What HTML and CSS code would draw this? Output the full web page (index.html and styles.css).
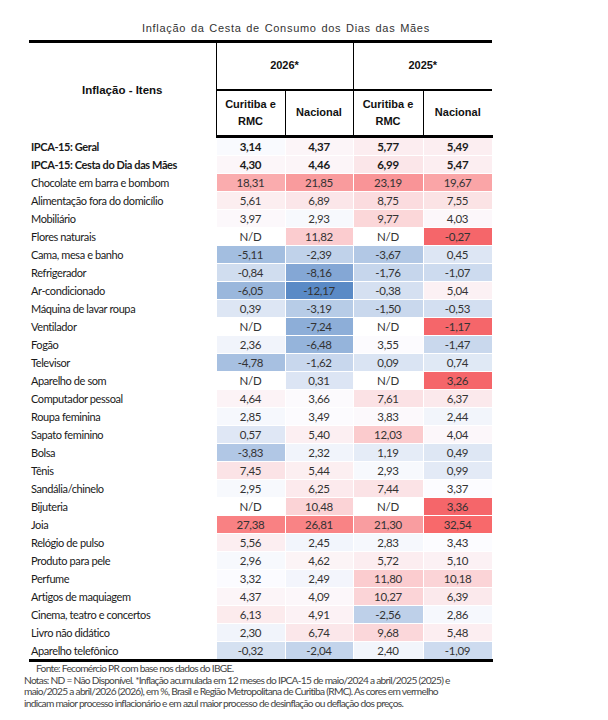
FILE: index.html
```html
<!DOCTYPE html>
<html lang="pt-BR">
<head>
    <meta charset="UTF-8">
    <title>Inflação da Cesta de Consumo dos Dias das Mães</title>
    <link rel="stylesheet" href="styles.css">
</head>
<body>
    <div class="page">
        <h1 class="title">Inflação da Cesta de Consumo dos Dias das Mães</h1>

        <table class="infl-table">
            <colgroup>
                <col class="col-label">
                <col class="col-a">
                <col class="col-b">
                <col class="col-c">
                <col class="col-d">
            </colgroup>
            <thead>
                <tr class="year-row">
                    <th rowspan="2" class="label-head">Inflação - Itens</th>
                    <th colspan="2" class="year">2026*</th>
                    <th colspan="2" class="year">2025*</th>
                </tr>
                <tr class="place-row">
                    <th>Curitiba e<br>RMC</th>
                    <th>Nacional</th>
                    <th>Curitiba e<br>RMC</th>
                    <th>Nacional</th>
                </tr>
            </thead>
            <tbody>
                <tr class="bold"><td>IPCA-15: Geral</td><td>3,14</td><td>4,37</td><td>5,77</td><td>5,49</td></tr>
                <tr class="bold"><td>IPCA-15: Cesta do Dia das Mães</td><td>4,30</td><td>4,46</td><td>6,99</td><td>5,47</td></tr>
                <tr><td>Chocolate em barra e bombom</td><td>18,31</td><td>21,85</td><td>23,19</td><td>19,67</td></tr>
                <tr><td>Alimentação fora do domicílio</td><td>5,61</td><td>6,89</td><td>8,75</td><td>7,55</td></tr>
                <tr><td>Mobiliário</td><td>3,97</td><td>2,93</td><td>9,77</td><td>4,03</td></tr>
                <tr><td>Flores naturais</td><td>N/D</td><td>11,82</td><td>N/D</td><td class="hl">-0,27</td></tr>
                <tr><td>Cama, mesa e banho</td><td>-5,11</td><td>-2,39</td><td>-3,67</td><td>0,45</td></tr>
                <tr><td>Refrigerador</td><td>-0,84</td><td>-8,16</td><td>-1,76</td><td>-1,07</td></tr>
                <tr><td>Ar-condicionado</td><td>-6,05</td><td>-12,17</td><td>-0,38</td><td>5,04</td></tr>
                <tr><td>Máquina de lavar roupa</td><td>0,39</td><td>-3,19</td><td>-1,50</td><td>-0,53</td></tr>
                <tr><td>Ventilador</td><td>N/D</td><td>-7,24</td><td>N/D</td><td class="hl">-1,17</td></tr>
                <tr><td>Fogão</td><td>2,36</td><td>-6,48</td><td>3,55</td><td>-1,47</td></tr>
                <tr><td>Televisor</td><td>-4,78</td><td>-1,62</td><td>0,09</td><td>0,74</td></tr>
                <tr><td>Aparelho de som</td><td>N/D</td><td>0,31</td><td>N/D</td><td class="hl">3,26</td></tr>
                <tr><td>Computador pessoal</td><td>4,64</td><td>3,66</td><td>7,61</td><td>6,37</td></tr>
                <tr><td>Roupa feminina</td><td>2,85</td><td>3,49</td><td>3,83</td><td>2,44</td></tr>
                <tr><td>Sapato feminino</td><td>0,57</td><td>5,40</td><td>12,03</td><td>4,04</td></tr>
                <tr><td>Bolsa</td><td>-3,83</td><td>2,32</td><td>1,19</td><td>0,49</td></tr>
                <tr><td>Tênis</td><td>7,45</td><td>5,44</td><td>2,93</td><td>0,99</td></tr>
                <tr><td>Sandália/chinelo</td><td>2,95</td><td>6,25</td><td>7,44</td><td>3,37</td></tr>
                <tr><td>Bijuteria</td><td>N/D</td><td>10,48</td><td>N/D</td><td class="hl">3,36</td></tr>
                <tr><td>Joia</td><td>27,38</td><td>26,81</td><td>21,30</td><td>32,54</td></tr>
                <tr><td>Relógio de pulso</td><td>5,56</td><td>2,45</td><td>2,83</td><td>3,43</td></tr>
                <tr><td>Produto para pele</td><td>2,96</td><td>4,62</td><td>5,72</td><td>5,10</td></tr>
                <tr><td>Perfume</td><td>3,32</td><td>2,49</td><td>11,80</td><td>10,18</td></tr>
                <tr><td>Artigos de maquiagem</td><td>4,37</td><td>4,09</td><td>10,27</td><td>6,39</td></tr>
                <tr><td>Cinema, teatro e concertos</td><td>6,13</td><td>4,91</td><td>-2,56</td><td>2,86</td></tr>
                <tr><td>Livro não didático</td><td>2,30</td><td>6,74</td><td>9,68</td><td>5,48</td></tr>
                <tr><td>Aparelho telefônico</td><td>-0,32</td><td>-2,04</td><td>2,40</td><td>-1,09</td></tr>
            </tbody>
        </table>

        <div class="notes">
            <p class="source">Fonte: Fecomércio PR com base nos dados do IBGE.</p>
            <p>Notas: ND = Não Disponível. *Inflação acumulada em 12 meses do IPCA-15 de maio/2024 a abril/2025 (2025) e<br>maio/2025 a abril/2026 (2026), em %, Brasil e Região Metropolitana de Curitiba (RMC). As cores em vermelho<br>indicam maior processo inflacionário e em azul maior processo de desinflação ou deflação dos preços.</p>
        </div>
    </div>

    <script>
        // Escala de cores do Excel: azul (mín) - branco (mediana) - vermelho (máx)
        const cells = document.querySelectorAll('.infl-table tbody td:not(:first-child)');
        const values = [];

        cells.forEach(cell => {
            const v = parseFloat(cell.textContent.replace(',', '.'));
            if (!isNaN(v)) values.push(v);
        });

        const sorted = [...values].sort((a, b) => a - b);
        const min = sorted[0];
        const max = sorted[sorted.length - 1];
        const mid = 3.4;

        const blue = [90, 138, 198];
        const white = [252, 252, 255];
        const red = [248, 105, 107];

        function mix(a, b, t) {
            return a.map((c, i) => Math.round(c + (b[i] - c) * t));
        }

        cells.forEach(cell => {
            if (cell.classList.contains('hl')) return;
            const v = parseFloat(cell.textContent.replace(',', '.'));
            if (isNaN(v)) return;
            let rgb;
            if (v < mid) {
                rgb = mix(white, blue, (mid - v) / (mid - min));
            } else {
                rgb = mix(white, red, Math.pow((v - mid) / (max - mid), 0.9));
            }
            cell.style.backgroundColor = `rgb(${rgb.join(',')})`;
        });
    </script>
</body>
</html>
```

FILE: styles.css
```css
* {
    margin: 0;
    padding: 0;
    box-sizing: border-box;
}

body {
    background-color: #fff;
    font-family: Lato, "Open Sans", sans-serif;
    color: #222;
}

.page {
    padding: 20px 0 0 29px;
}

.title {
    font-family: "Liberation Sans", Arial, sans-serif;
    font-weight: normal;
    font-size: 11px;
    letter-spacing: 0.7px;
    word-spacing: 1px;
    color: #333;
    padding-left: 113px;
    height: 20px;
    line-height: 16px;
}

.infl-table {
    width: 463px;
    border-collapse: collapse;
    table-layout: fixed;
    border-top: 3px solid #000;
    border-bottom: 3px solid #000;
}

.col-label { width: 187px; }
.col-a { width: 69px; }
.col-b { width: 68px; }
.col-c { width: 70px; }
.col-d { width: 69px; }

.infl-table th {
    font-family: "Liberation Sans", Arial, sans-serif;
    font-weight: bold;
    font-size: 11px;
    color: #111;
    text-align: center;
    vertical-align: middle;
    border-left: 1px solid #000;
    line-height: 17px;
}

.infl-table th.label-head {
    border-left: none;
    font-size: 11.5px;
    padding-top: 2px;
}

.year-row th {
    height: 48px;
}

.year-row th.year {
    border-bottom: 2px solid #000;
}

.place-row th {
    height: 47px;
    border-bottom: 3px solid #000;
}

.infl-table td {
    height: 18px;
    font-size: 11.5px;
    letter-spacing: -0.3px;
    line-height: 17px;
    text-align: center;
    color: #333;
    border: 1px solid #fff;
    white-space: nowrap;
}

.infl-table td:first-child {
    text-align: left;
    padding-left: 2px;
    font-size: 11px;
    letter-spacing: -0.4px;
    color: #1a1a1a;
    border: none;
}

.infl-table tr.bold td {
    font-weight: bold;
    color: #1a1a1a;
}

.infl-table td.hl {
    background-color: #f5666a;
}

.notes {
    font-size: 10.2px;
    letter-spacing: -0.72px;
    line-height: 11.5px;
    color: #444;
    margin-left: -5px;
    margin-top: 1px;
    width: 480px;
}

.notes .source {
    padding-left: 12px;
}
```
